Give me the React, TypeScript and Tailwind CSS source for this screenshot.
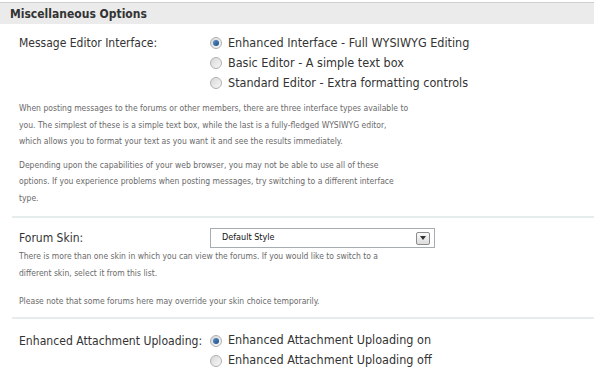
import React from 'react';

const Radio = ({ checked }: { checked?: boolean }) => (
  <span className="inline-flex h-[12px] w-[12px] shrink-0 items-center justify-center rounded-full border border-[#b0b0b0] bg-gradient-to-br from-[#d8d8d8] to-[#f8f8f8]">
    {checked && <span className="h-[6px] w-[6px] rounded-full bg-gradient-to-br from-[#5b8fc7] to-[#1c4f8c]" />}
  </span>
);

const RadioRow = ({ checked, label }: { checked?: boolean; label: string }) => (
  <div className="flex h-[20px] items-center gap-[6px] whitespace-nowrap">
    <Radio checked={checked} />
    <span>{label}</span>
  </div>
);

export default function App() {
  return (
    <div className="h-[374px] w-[594px] overflow-hidden bg-white font-['DejaVu_Sans_Condensed',sans-serif] text-[#333]">
      <div className="h-[2px]" />
      <div className="flex h-[22px] items-center border-t border-[#cfcfcf] bg-[#ebebeb] pl-[10px] text-[12px] font-bold text-[#333]">
        Miscellaneous Options
      </div>

      {/* Message editor */}
      <div className="px-[19px] pt-[9px] pb-[10px]">
        <div className="flex text-[12.5px]">
          <div className="w-[191px] pt-[1px] text-[12px]">Message Editor Interface:</div>
          <div className="flex flex-col">
            <RadioRow checked label="Enhanced Interface - Full WYSIWYG Editing" />
            <RadioRow label="Basic Editor - A simple text box" />
            <RadioRow label="Standard Editor - Extra formatting controls" />
          </div>
        </div>
        <div className="mt-[7px] whitespace-nowrap text-[8.5px] leading-[16.5px] text-[#6a6a6a]">
          <p>
            When posting messages to the forums or other members, there are three interface types available to
            <br />
            you. The simplest of these is a simple text box, while the last is a fully-fledged WYSIWYG editor,
            <br />
            which allows you to format your text as you want it and see the results immediately.
          </p>
          <p className="mt-[7px]">
            Depending upon the capabilities of your web browser, you may not be able to use all of these
            <br />
            options. If you experience problems when posting messages, try switching to a different interface
            <br />
            type.
          </p>
        </div>
      </div>

      <div className="ml-[12px] border-t-2 border-[#e6ecec]" />

      {/* Forum skin */}
      <div className="px-[19px] pt-[10px] pb-[7px]">
        <div className="flex items-center">
          <div className="w-[191px] text-[12px]">Forum Skin:</div>
          <div className="flex h-[20px] w-[225px] items-center justify-between border border-[#a5acb2] pr-[4px] pl-[11px] text-[9px] text-[#111]">
            <span>Default Style</span>
            <span className="flex h-[13px] w-[14px] items-center justify-center rounded-[2px] border border-[#8c8c8c] bg-gradient-to-b from-[#fafafa] to-[#dcdcdc]">
              <svg width="6" height="4" viewBox="0 0 6 4"><path d="M0 0h6L3 4z" fill="#333" /></svg>
            </span>
          </div>
        </div>
        <div className="whitespace-nowrap text-[8.5px] leading-[16.5px] text-[#6a6a6a]">
          <p>
            There is more than one skin in which you can view the forums. If you would like to switch to a
            <br />
            different skin, select it from this list.
          </p>
          <p className="mt-[12px]">Please note that some forums here may override your skin choice temporarily.</p>
        </div>
      </div>

      <div className="ml-[12px] border-t-2 border-[#e6ecec]" />

      {/* Attachment uploading */}
      <div className="px-[19px] pt-[12px] text-[12.5px]">
        <div className="flex">
          <div className="w-[191px] whitespace-nowrap pt-[1px] text-[12.1px]">Enhanced Attachment Uploading:</div>
          <div className="flex flex-col">
            <RadioRow checked label="Enhanced Attachment Uploading on" />
            <RadioRow label="Enhanced Attachment Uploading off" />
          </div>
        </div>
      </div>
    </div>
  );
}
